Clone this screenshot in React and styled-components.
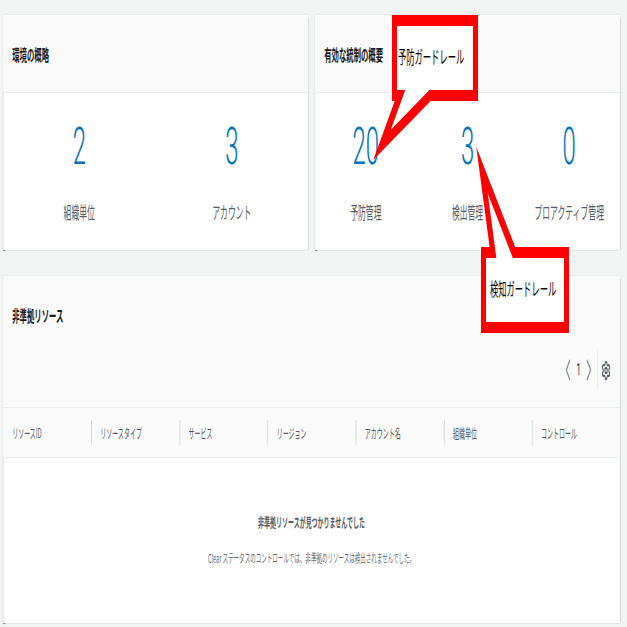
import React from 'react';
import styled, { createGlobalStyle } from 'styled-components';
import { Settings } from 'lucide-react';

const SCALE = 0.46;
const PAGE_W = 1363;

const Global = createGlobalStyle`
  html, body {
    margin: 0;
    padding: 0;
    overflow: hidden;
    background: #f2f3f3;
  }
  body {
    font-family: "Noto Sans CJK JP", "Noto Sans", sans-serif;
    color: #16191f;
  }
`;

const Page = styled.div`
  position: relative;
  width: ${PAGE_W}px;
  height: 627px;
  box-sizing: border-box;
  padding: 14px 15px 0 6.5px;
  display: flex;
  flex-direction: column;
  gap: 25px;
  transform: scaleX(${SCALE});
  transform-origin: 0 0;
`;

const TopRow = styled.div`
  display: flex;
  gap: 15px;
`;

const Card = styled.section`
  flex: 1;
  display: flex;
  flex-direction: column;
  background: #ffffff;
  border-top: 1px solid #eaeded;
  box-shadow: 0 1px 1px 0 rgba(0, 28, 36, 0.35), 1px 1px 1px 0 rgba(0, 28, 36, 0.15),
    -1px 1px 1px 0 rgba(0, 28, 36, 0.15);
`;

const CardHeader = styled.header`
  height: 77px;
  display: flex;
  align-items: center;
  padding: 0 20px;
  background: #fafafa;
  border-bottom: 1px solid #eaeded;
`;

const Title = styled.h2`
  margin: 0;
  font-size: 16px;
  line-height: 24px;
  font-weight: 700;
  color: #16191f;
`;

const StatGrid = styled.div`
  display: grid;
  grid-template-columns: repeat(${(p) => p.$cols}, 1fr);
  padding: 24px 0 26px;
`;

const Stat = styled.div`
  display: flex;
  flex-direction: column;
  align-items: center;
`;

const StatValue = styled.div`
  font-family: Roboto, "Open Sans", sans-serif;
  font-weight: 300;
  font-size: 52px;
  line-height: 60px;
  color: #0073bb;
`;

const StatLabel = styled.div`
  margin-top: 23px;
  font-size: 17px;
  line-height: 24px;
  color: #545b64;
`;

const TableCard = styled(Card)`
  flex: none;
  height: 348px;
  box-sizing: border-box;
`;

const TableHeader = styled.header`
  display: flex;
  flex-direction: column;
  padding: 27px 20px 17px;
  background: #fafafa;
  border-bottom: 1px solid #eaeded;
`;

const Pager = styled.div`
  margin-top: 23px;
  height: 40px;
  display: flex;
  align-items: center;
  justify-content: flex-end;
`;

const PagerGroup = styled.div`
  display: flex;
  align-items: center;
  gap: 12px;
`;

const PageNum = styled.span`
  width: 9px;
  text-align: center;
  font-family: Roboto, "Noto Sans", sans-serif;
  font-size: 16px;
  line-height: 24px;
  color: #16191f;
`;

const PagerDivider = styled.span`
  width: 2px;
  height: 40px;
  background: #eaeded;
  margin: 0 7px 0 12px;
`;

const GearWrap = styled.span`
  display: flex;
  color: #545b64;
`;

const HeadRow = styled.div`
  display: grid;
  grid-template-columns: repeat(7, 1fr);
  height: 49px;
  background: #fafafa;
  border-bottom: 1px solid #eaeded;
`;

const HeadCell = styled.div`
  display: flex;
  align-items: center;
`;

const HeadLabel = styled.span`
  border-left: 2px solid ${(p) => (p.$first ? 'transparent' : '#d5dbdb')};
  padding-left: 18px;
  font-size: 13px;
  line-height: 25px;
  color: #545b64;
  white-space: nowrap;
`;

const Empty = styled.div`
  flex: 1;
  display: flex;
  flex-direction: column;
  align-items: center;
  padding-top: 52px;
  gap: 12px;
`;

const EmptyTitle = styled.div`
  font-size: 13px;
  line-height: 24px;
  font-weight: 700;
  color: #545b64;
`;

const EmptyText = styled.div`
  font-size: 12px;
  line-height: 24px;
  color: #687078;
`;

const Overlay = styled.svg`
  position: absolute;
  left: 0;
  top: 0;
  width: ${PAGE_W}px;
  height: 627px;
  overflow: visible;
  pointer-events: none;
`;

const CalloutText = styled.div`
  position: absolute;
  left: ${(p) => p.$x}px;
  top: ${(p) => p.$y}px;
  font-size: 18px;
  line-height: 24px;
  color: #000000;
  white-space: nowrap;
`;

const Chevron = ({ dir }) => (
  <svg width="12" height="22" viewBox="0 0 12 22" fill="none">
    <path
      d={dir === 'left' ? 'M10 1 L2 11 L10 21' : 'M2 1 L10 11 L2 21'}
      stroke="#879596"
      strokeWidth="2.4"
      strokeLinejoin="miter"
    />
  </svg>
);

const columns = ['リソースID', 'リソースタイプ', 'サービス', 'リージョン', 'アカウント名', '組織単位', 'コントロール'];

const x = (ref) => (ref / SCALE).toFixed(1);

const bubble1 = `M${x(394.5)},20.5 H${x(475.5)} V95.5 H${x(430)} L${x(382)},145 L${x(400)},95.5 H${x(394.5)} Z`;
const bubble2 = `M${x(483.5)},252.5 H${x(493)} L${x(482)},170 L${x(514)},252.5 H${x(566.5)} V327.5 H${x(483.5)} Z`;

export default function App() {
  return (
    <>
      <Global />
      <Page>
        <TopRow>
          <Card>
            <CardHeader>
              <Title>環境の概略</Title>
            </CardHeader>
            <StatGrid $cols={2}>
              <Stat>
                <StatValue>2</StatValue>
                <StatLabel>組織単位</StatLabel>
              </Stat>
              <Stat>
                <StatValue>3</StatValue>
                <StatLabel>アカウント</StatLabel>
              </Stat>
            </StatGrid>
          </Card>
          <Card>
            <CardHeader>
              <Title>有効な統制の概要</Title>
            </CardHeader>
            <StatGrid $cols={3}>
              <Stat>
                <StatValue>20</StatValue>
                <StatLabel>予防管理</StatLabel>
              </Stat>
              <Stat>
                <StatValue>3</StatValue>
                <StatLabel>検出管理</StatLabel>
              </Stat>
              <Stat>
                <StatValue>0</StatValue>
                <StatLabel>プロアクティブ管理</StatLabel>
              </Stat>
            </StatGrid>
          </Card>
        </TopRow>

        <TableCard>
          <TableHeader>
            <Title>非準拠リソース</Title>
            <Pager>
              <PagerGroup>
                <Chevron dir="left" />
                <PageNum>1</PageNum>
                <Chevron dir="right" />
              </PagerGroup>
              <PagerDivider />
              <GearWrap>
                <Settings size={21} strokeWidth={2.4} />
              </GearWrap>
            </Pager>
          </TableHeader>
          <HeadRow>
            {columns.map((c, i) => (
              <HeadCell key={c}>
                <HeadLabel $first={i === 0}>{c}</HeadLabel>
              </HeadCell>
            ))}
          </HeadRow>
          <Empty>
            <EmptyTitle>非準拠リソースが見つかりませんでした</EmptyTitle>
            <EmptyText>Clear ステータスのコントロールでは、非準拠のリソースは検出されませんでした。</EmptyText>
          </Empty>
        </TableCard>

        <Overlay viewBox={`0 0 ${PAGE_W} 627`}>
          <path d={bubble1} fill="#ffffff" stroke="#ff0000" strokeWidth="11" strokeLinejoin="miter" strokeMiterlimit="10" />
          <path d={bubble2} fill="#ffffff" stroke="#ff0000" strokeWidth="11" strokeLinejoin="miter" strokeMiterlimit="10" />
        </Overlay>
        <CalloutText $x={x(398)} $y={44}>予防ガードレール</CalloutText>
        <CalloutText $x={x(490)} $y={276}>検知ガードレール</CalloutText>
      </Page>
    </>
  );
}
